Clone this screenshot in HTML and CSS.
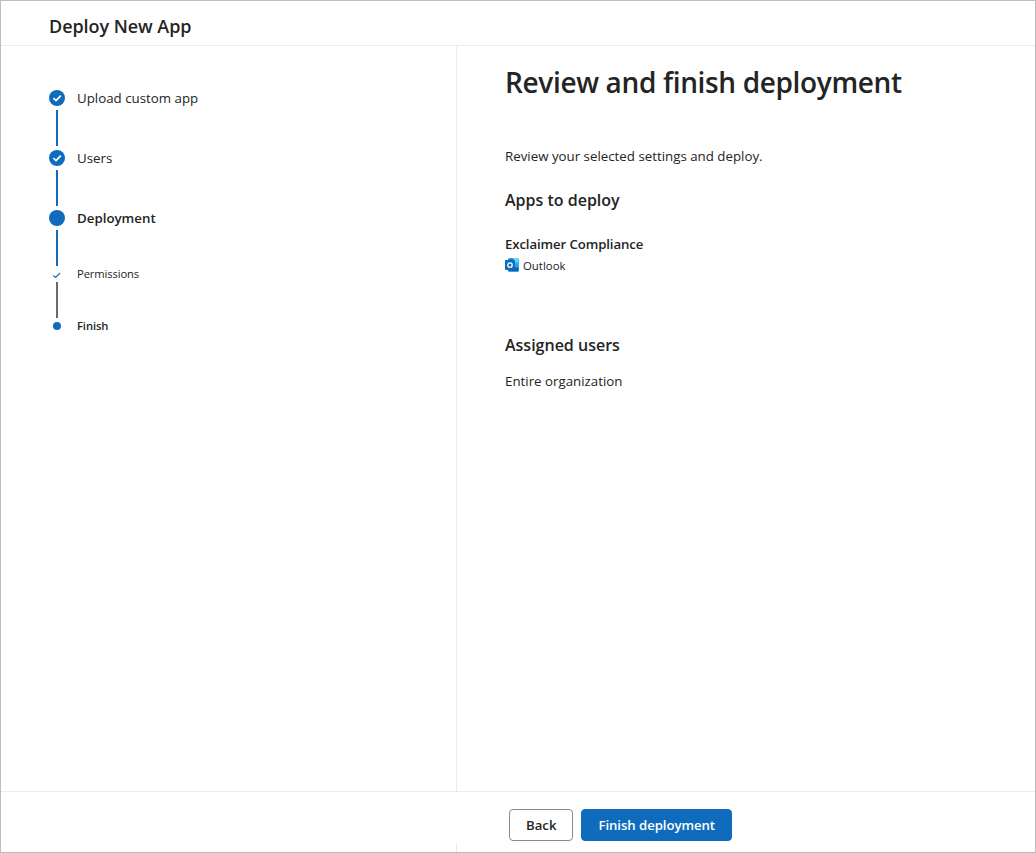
FILE: index.html
```html
<!DOCTYPE html>
<html lang="en">
<head>
<meta charset="UTF-8">
<title>Deploy New App</title>
<link rel="stylesheet" href="styles.css">
</head>
<body>
<div id="frame">
  <div id="header">Deploy New App</div>
  <div id="main">
    <div id="steps">
      <div class="step">
        <div class="marker">
          <svg class="dot-large" viewBox="0 0 16 16"><circle cx="8" cy="8" r="8" fill="#0f6cbd"/><path d="M4.4 8.2 L7 10.6 L11.8 5.6" fill="none" stroke="#fff" stroke-width="1.7"/></svg>
        </div>
        <div class="step-label">Upload custom app</div>
      </div>
      <div class="line"></div>
      <div class="step">
        <div class="marker">
          <svg class="dot-large" viewBox="0 0 16 16"><circle cx="8" cy="8" r="8" fill="#0f6cbd"/><path d="M4.4 8.2 L7 10.6 L11.8 5.6" fill="none" stroke="#fff" stroke-width="1.7"/></svg>
        </div>
        <div class="step-label">Users</div>
      </div>
      <div class="line"></div>
      <div class="step">
        <div class="marker">
          <svg class="dot-large" viewBox="0 0 16 16"><circle cx="8" cy="8" r="8" fill="#0f6cbd"/></svg>
        </div>
        <div class="step-label current">Deployment</div>
      </div>
      <div class="line short"></div>
      <div class="step sub">
        <div class="marker">
          <svg class="tick" viewBox="0 0 8 8"><path d="M0.3 5.5 L2.5 7.5 L7.2 3" fill="none" stroke="#0f6cbd" stroke-width="1.1"/></svg>
        </div>
        <div class="step-label small">Permissions</div>
      </div>
      <div class="line grey"></div>
      <div class="step sub">
        <div class="marker"><span class="dot-small"></span></div>
        <div class="step-label small strong">Finish</div>
      </div>
    </div>
    <div id="content">
      <h1>Review and finish deployment</h1>
      <p class="intro">Review your selected settings and deploy.</p>
      <h2>Apps to deploy</h2>
      <div class="app-name">Exclaimer Compliance</div>
      <div class="app-host">
        <svg class="outlook" viewBox="0 0 14 14">
          <rect x="3" y="0.5" width="11" height="13" rx="1.5" fill="#28a8ea"/>
          <rect x="3.5" y="0.5" width="5" height="4" fill="#0078d4"/>
          <rect x="8.5" y="0.5" width="5" height="4" fill="#50d9ff"/>
          <rect x="3.5" y="9.5" width="10" height="4" fill="#0364b8"/>
          <rect x="0" y="2" width="10" height="10" rx="1" fill="#0f6cbd"/>
          <circle cx="5" cy="7" r="2.2" fill="none" stroke="#fff" stroke-width="1.3"/>
        </svg>
        <span>Outlook</span>
      </div>
      <h2 class="users-title">Assigned users</h2>
      <p class="users">Entire organization</p>
    </div>
  </div>
  <div id="footer">
    <button class="btn">Back</button>
    <button class="btn primary">Finish deployment</button>
  </div>
</div>
</body>
</html>
```
FILE: styles.css
```css
* {
  box-sizing: border-box;
}
html, body {
  margin: 0;
  height: 100%;
}
body {
  font-family: "Open Sans", "Noto Sans", Arial, sans-serif;
  color: #242424;
  background: white;
}
#frame {
  width: 1036px;
  height: 853px;
  border: 1px solid #bdbdbd;
  display: flex;
  flex-direction: column;
}
#header {
  height: 45px;
  padding: 12px 0 0 48px;
  font-size: 18px;
  line-height: 26px;
  font-weight: 600;
  letter-spacing: -0.05px;
  border-bottom: 1px solid #ebebeb;
}
#main {
  height: 745px;
  display: flex;
}
#steps {
  width: 456px;
  padding: 44px 0 0 48px;
  border-right: 1px solid #ebebeb;
}
.step {
  display: flex;
  align-items: center;
  height: 16px;
}
.marker {
  width: 16px;
  height: 16px;
  margin-right: 12px;
  display: flex;
  align-items: center;
  justify-content: center;
}
.dot-large {
  width: 16px;
  height: 16px;
}
.tick {
  width: 8px;
  height: 8px;
}
.dot-small {
  width: 8px;
  height: 8px;
  border-radius: 50%;
  background: #0f6cbd;
}
.step-label {
  font-size: 13.3px;
  white-space: nowrap;
}
.step-label.current {
  font-weight: 600;
}
.step-label.small {
  padding-bottom: 2px;
  font-size: 11.2px;
  letter-spacing: -0.1px;
}
.step-label.strong {
  font-weight: 600;
}
.line {
  width: 2px;
  height: 36px;
  margin: 4px 0 4px 7px;
  background: #0f6cbd;
}
.line.short {
  height: 36px;
  margin-bottom: 0;
}
.line.grey {
  height: 36px;
  margin-top: 0;
  margin-bottom: 0;
  background: #6b6b6b;
}
#content {
  padding-left: 48px;
}
h1 {
  margin: 18px 0 0;
  font-size: 28px;
  line-height: 36px;
  font-weight: 600;
  letter-spacing: -0.35px;
}
.intro {
  margin: 46px 0 0;
  font-size: 13.3px;
  line-height: 20px;
}
h2 {
  margin: 24px 0 0;
  font-size: 16px;
  line-height: 20px;
  font-weight: 600;
}
.app-name {
  margin-top: 24px;
  font-size: 13.2px;
  line-height: 20px;
  font-weight: 600;
  letter-spacing: -0.1px;
}
.app-host {
  display: flex;
  align-items: center;
  height: 20px;
  margin-top: 1px;
  font-size: 11.4px;
}
.outlook {
  width: 14px;
  height: 14px;
  margin-right: 4px;
}
.users-title {
  margin-top: 60px;
}
.users {
  margin: 16px 0 0;
  font-size: 13.3px;
  line-height: 20px;
}
#footer {
  position: relative;
  flex: 1;
  border-top: 1px solid #ebebeb;
  display: flex;
  align-items: flex-start;
  gap: 8px;
  padding: 17px 0 0 508px;
}
/* bit of the pane divider showing under the buttons */
#footer::after {
  content: "";
  position: absolute;
  left: 455px;
  bottom: 0;
  width: 1px;
  height: 9px;
  background: #ebebeb;
}
.btn {
  height: 32px;
  padding: 0 16px;
  font-family: inherit;
  font-size: 13.2px;
  font-weight: 600;
  color: #242424;
  background: white;
  border: 1px solid #8a8a8a;
  border-radius: 4px;
}
.btn.primary {
  letter-spacing: -0.06px;
  color: white;
  background: #0f6cbd;
  border-color: #0f6cbd;
}
```
